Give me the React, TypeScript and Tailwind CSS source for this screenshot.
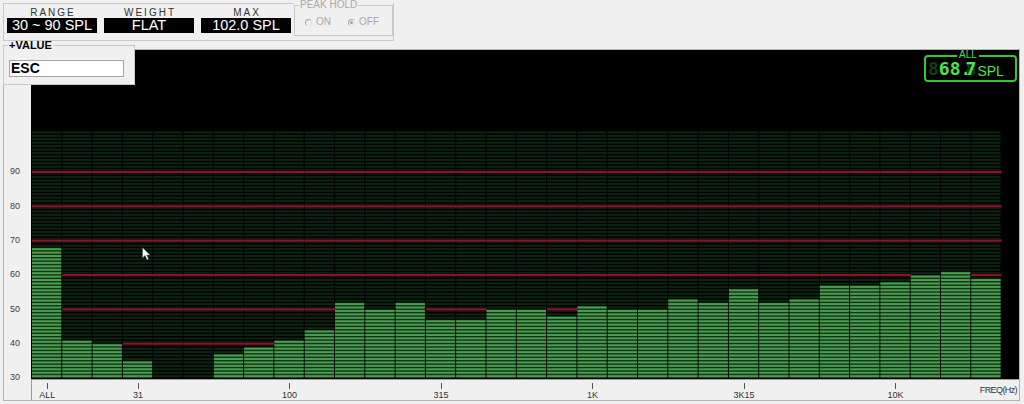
const BANDS = [
  68.7, 41, 40, 35, 29, 29, 37, 39, 41, 44, 52, 50, 52, 47, 47, 50, 50, 48, 51, 50, 50, 53, 52, 56, 52, 53, 57,
  57, 58, 60, 61, 59,
];
const TICKS: Record<number, string> = { 0: 'ALL', 3: '31', 8: '100', 13: '315', 18: '1K', 23: '3K15', 28: '10K' };
const CELL = 30.3;
const STEP = 3.433;
const yOf = (v: number) => 328 - (v - 30) * STEP;

function Spectrum() {
  return (
    <svg width={988} height={329} className="block">
      <rect width="988" height="329" fill="#000" />
      {BANDS.map((v, i) => {
        const lit = Math.floor(v - 30);
        const x = 1 + i * CELL;
        return (
          <g key={i}>
            {lit > 0 && <rect x={x} y={yOf(30 + lit)} width={CELL - 1} height={lit * STEP} fill="#14361a" />}
            {Array.from({ length: 72 }, (_, k) => (
              <rect
                key={k}
                x={x}
                y={yOf(31 + k) + 0.6}
                width={CELL - 1}
                height={2}
                fill={k < lit ? '#4a9d4e' : '#0d2612'}
              />
            ))}
            {[40, 50, 60, 70, 80, 90]
              .filter((L) => lit < L - 30)
              .map((L) => (
                <g key={'r' + L}>
                  <rect x={x} y={yOf(L) - 2} width={CELL} height={4} fill="#24060b" />
                  <rect x={x} y={yOf(L) - 1} width={CELL} height={2} fill="#7f1a2a" />
                </g>
              ))}
          </g>
        );
      })}
    </svg>
  );
}

function ValueBox({ label, value }: { label: string; value: string }) {
  return (
    <div className="flex flex-col items-center w-[90px]">
      <span className="mt-[4px] h-[10px] text-[10px] leading-[10px] tracking-[2px] pl-[2px] text-[#333]">{label}</span>
      <div className="w-[90px] h-[15px] bg-black text-white text-[14.5px] leading-[15px] text-center">{value}</div>
    </div>
  );
}

function Radio({ on, label }: { on?: boolean; label: string }) {
  return (
    <div className="flex items-center gap-[4px]">
      <span className="w-[7px] h-[7px] rounded-full border border-[#a8a8a8] border-r-[#e2e2e2] border-b-[#e2e2e2] flex items-center justify-center">
        {on && <span className="w-[3px] h-[3px] rounded-full bg-[#a0a0a0]" />}
      </span>
      <span className="text-[10px] leading-[10px]">{label}</span>
    </div>
  );
}

export default function App() {
  return (
    <div className="relative w-[1024px] h-[404px] overflow-hidden bg-[#f0f0f0] font-['Liberation_Sans',Arial,sans-serif] text-[#333]">
      <div className="pl-[3px] pt-[3px]">
        {/* top readouts */}
        <div className="flex w-[391px] h-[38px] border-x border-b border-[#c9c9c9]">
          <div className="flex gap-[7px] w-[290px] px-[3px] border-t border-[#c9c9c9]">
            <ValueBox label="RANGE" value="30 ~ 90 SPL" />
            <ValueBox label="WEIGHT" value="FLAT" />
            <ValueBox label="MAX" value="102.0 SPL" />
          </div>
          <fieldset className="-mt-[3px] w-[99px] h-[36px] border border-[#c9c9c9] text-[#a8a8a8]">
            <legend className="ml-[4px] px-[1px] text-[10px] leading-[10px]">PEAK HOLD</legend>
            <div className="mt-[7px] ml-[10px] flex items-center gap-[17px]">
              <Radio label="ON" />
              <Radio on label="OFF" />
            </div>
          </fieldset>
        </div>

        {/* spectrum panel */}
        <div className="mt-[8px] w-[1017px] h-[352px] flex border border-[#b4b4b4]">
          <div className="w-[27px] flex flex-col pt-[104.8px] text-[9px] text-[#404040]">
            {[90, 80, 70, 60, 50, 40, 30].map((n) => (
              <div key={n} className="h-[34.33px] flex items-center pl-[6px] leading-none">
                {n}
              </div>
            ))}
          </div>
          <div className="w-[988px] flex flex-col">
            <div className="relative h-[329px] bg-black">
              <Spectrum />
              {/* level display */}
              <div className="absolute top-[5px] left-[893px] w-[93px] h-[27px] border-2 border-[#31c931] rounded-[4px]">
                <span className="absolute -top-[7px] left-[31px] px-[2px] bg-black text-[10px] leading-[10px] text-[#48dc48]">
                  ALL
                </span>
                <div className="flex items-center h-full pl-[2px] font-['DejaVu_Sans_Mono',monospace] font-bold text-[18px] leading-[18px] text-[#4fe34f]">
                  <span className="text-[#173d17]">8</span>
                  <span>68</span>
                  <span className="inline-block w-[5px] text-center">.</span>
                  <span className="relative">
                    <span className="text-[#173d17]">8</span>
                    <span className="absolute left-0 top-0">7</span>
                  </span>
                  <span className="ml-[1px] font-['Liberation_Sans',Arial,sans-serif] font-normal text-[14px] leading-[14px] mt-[4px]">
                    SPL
                  </span>
                </div>
              </div>
              {/* mouse pointer */}
              <svg className="absolute left-[111px] top-[197px]" width="10" height="14" viewBox="0 0 10 14">
                <path d="M0.5 0.5 L0.5 11 L3 8.6 L5 12.8 L6.7 12 L4.8 8 L8 8 Z" fill="#fff" stroke="#555" strokeWidth="0.6" />
              </svg>
            </div>
            <div className="relative flex-1 border-t border-l border-[#9c9c9c]">
              <div className="grid grid-cols-32 w-[969.6px] text-[9px] leading-[9px] text-[#333]">
                {BANDS.map((_, i) => (
                  <div key={i} className="flex flex-col items-center">
                    {TICKS[i] && (
                      <>
                        <span className="mt-[3px] w-px h-[6px] bg-[#555]" />
                        <span className="mt-[2px] whitespace-nowrap">{TICKS[i]}</span>
                      </>
                    )}
                  </div>
                ))}
              </div>
              <span className="absolute right-[2px] top-[6px] text-[9px] leading-[9px] tracking-[-0.6px]">FREQ(Hz)</span>
            </div>
          </div>
        </div>
      </div>

      {/* +VALUE group */}
      <fieldset className="absolute left-[3px] top-[39px] w-[132px] h-[46px] bg-[#f0f0f0] border border-[#c9c9c9]">
        <legend className="ml-[4px] px-[1px] text-[11px] leading-[12px] font-bold text-black">+VALUE</legend>
        <div className="mt-[9px] ml-[5px] w-[115px] h-[17px] bg-white border border-[#a5a5a5] pl-[1px] text-[14px] leading-[15px] font-bold text-black">
          ESC
        </div>
      </fieldset>
    </div>
  );
}
